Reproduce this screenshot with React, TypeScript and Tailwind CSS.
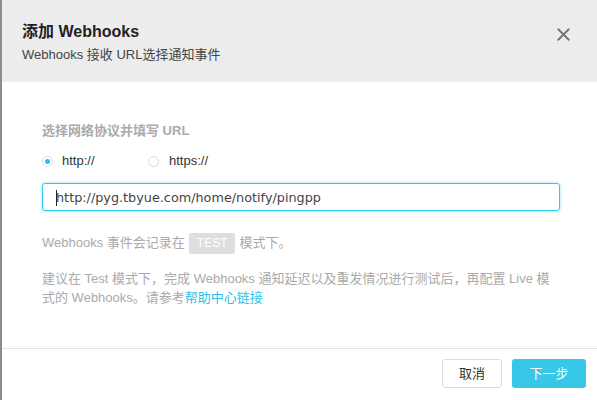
import { X } from 'lucide-react';

const font = { fontFamily: '"Liberation Sans", "Noto Sans CJK SC", sans-serif' };

export default function App() {
  return (
    <div className="w-[597px] h-[400px] bg-white border-l-2 border-[#8c8c8c] flex flex-col text-[13px]" style={font}>
      {/* header */}
      <div className="h-[82px] bg-[#ececec] pl-[20px] pr-[23px] pt-[21px] flex justify-between">
        <div>
          <div className="text-[16px] font-bold leading-[22px] text-[#222]">添加 Webhooks</div>
          <div className="text-[13px] leading-[18px] mt-[3px] text-[#444]">Webhooks 接收 URL选择通知事件</div>
        </div>
        <button className="mt-[3px] h-[20px] text-[#6f7777]">
          <X size={21} strokeWidth={2.2} />
        </button>
      </div>

      {/* body */}
      <div className="flex-1 pl-[40px] pr-[36px] pt-[39px]">
        <div className="font-bold text-[#aaa] leading-[20px]">选择网络协议并填写 URL</div>
        <div className="flex items-center mt-[11px] h-[18px] text-[#333]">
          <label className="flex items-center w-[106px]">
            <span className="w-[11px] h-[11px] rounded-full border border-[#ddd] flex items-center justify-center mr-[9px]">
              <span className="w-[5px] h-[5px] rounded-full bg-[#2ebfe6]" />
            </span>
            http://
          </label>
          <label className="flex items-center">
            <span className="w-[11px] h-[11px] rounded-full border border-[#ddd] mr-[10px]" />
            https://
          </label>
        </div>
        <div className="mt-[13px] h-[28px] w-[518px] rounded-[3px] border border-[#2fcbe8] shadow-[0_0_3px_#7fe0f2] flex items-center pl-[13px] pt-[1px] text-[#444]"
          style={{ fontFamily: '"DejaVu Sans", sans-serif', fontSize: '12.8px' }}>
          <span className="w-px h-[16px] bg-[#222] mr-[-1px]" />
          http://pyg.tbyue.com/home/notify/pingpp
        </div>
        <div className="mt-[21px] flex items-center text-[#aaa] leading-[22px]">
          Webhooks 事件会记录在
          <span className="mx-[4px] px-[8px] h-[21px] bg-[#dedede] text-white rounded-[2px] text-[12px] flex items-center">TEST</span>
          模式下。
        </div>
        <p className="mt-[15px] text-[#aaa] leading-[19px] pr-[4px]">
          建议在 Test 模式下，完成 Webhooks 通知延迟以及重发情况进行测试后，再配置 Live 模式的 Webhooks。请参考<a className="text-[#2ebfe6]">帮助中心链接</a>
        </p>
      </div>

      {/* footer */}
      <div className="h-[52px] border-t border-[#e3e3e3] flex items-center justify-end gap-[10px] pr-[11px] pb-[2px]">
        <button className="w-[60px] h-[29px] border border-[#ddd] rounded-[3px] text-[#333] bg-white">取消</button>
        <button className="w-[74px] h-[29px] rounded-[3px] text-white bg-[#36c8e6]">下一步</button>
      </div>
    </div>
  );
}
